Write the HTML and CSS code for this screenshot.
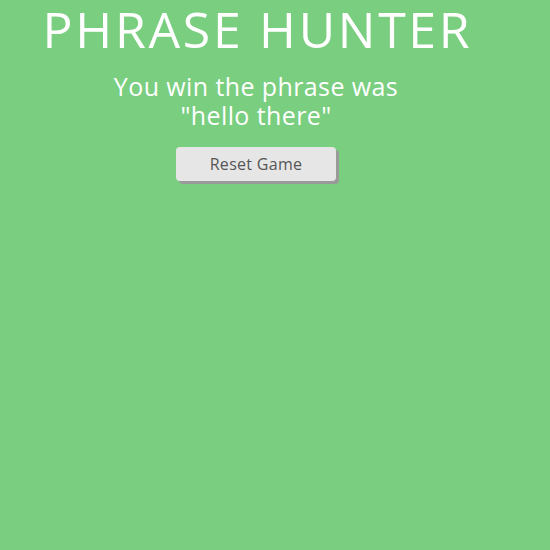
FILE: index.html
```html
<!DOCTYPE html>
<html>
<head>
<meta charset="utf-8">
<link rel="stylesheet" href="styles.css">
</head>
<body>
<div class="overlay">
  <h1 class="title">PHRASE HUNTER</h1>
  <h2 class="message">You win the phrase was "hello there"</h2>
  <button class="reset">Reset Game</button>
</div>
</body>
</html>
```
FILE: styles.css
```css
html, body {
  margin: 0;
  padding: 0;
  background: #7ace7f;
  height: 100%;
}
.overlay {
  width: 512px;
  display: flex;
  flex-direction: column;
  align-items: center;
  font-family: "Open Sans", "DejaVu Sans", sans-serif;
  color: #fff;
}
.title {
  margin: 0;
  padding-top: 1px;
  padding-left: 3px;
  font-size: 50px;
  font-weight: 400;
  line-height: 56px;
  letter-spacing: 2.7px;
}
.message {
  margin: 15px 0 0;
  width: 310px;
  text-align: center;
  font-size: 25px;
  font-weight: 500;
  line-height: 29px;
  letter-spacing: 0.4px;
}
.reset {
  margin-top: 17px;
  width: 160px;
  height: 34px;
  border: none;
  border-radius: 4px;
  background: #e6e6e6;
  color: #555;
  font-family: "Open Sans", sans-serif;
  font-size: 16px;
  letter-spacing: 0.3px;
  box-shadow: 3px 3px 0 #9a9a9a;
}
```
